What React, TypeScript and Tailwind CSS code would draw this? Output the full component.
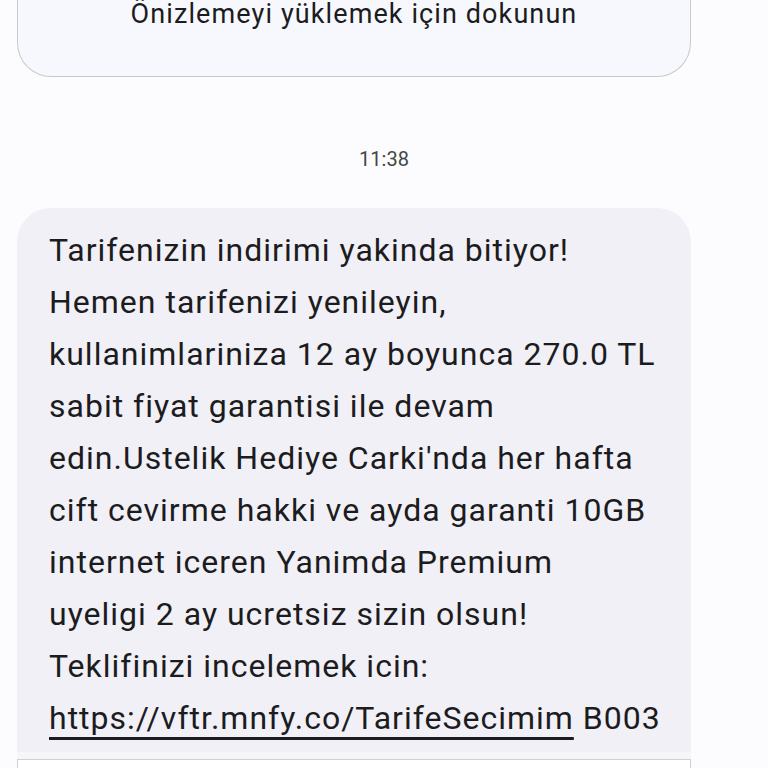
export default function App() {
  const lines = [
    "Tarifenizin indirimi yakinda bitiyor!",
    "Hemen tarifenizi yenileyin,",
    "kullanimlariniza 12 ay boyunca 270.0 TL",
    "sabit fiyat garantisi ile devam",
    "edin.Ustelik Hediye Carki'nda her hafta",
    "cift cevirme hakki ve ayda garanti 10GB",
    "internet iceren Yanimda Premium",
    "uyeligi 2 ay ucretsiz sizin olsun!",
    "Teklifinizi incelemek icin:",
  ];

  return (
    <div className="w-[768px] h-[768px] overflow-hidden bg-[#fcfbfe] font-['Roboto',sans-serif] text-[#1c1c1e]">
      <div className="ml-[17px] mr-[77px] -mt-[60px] h-[137px] rounded-b-[34px] border-[1.5px] border-t-0 border-[#c9c9cd] bg-[#f7f8fd] pt-[58px] text-center">
        <p className="text-[27px] leading-[32px] tracking-[1.1px]">Önizlemeyi yüklemek için dokunun</p>
      </div>

      <p className="mt-[68px] text-center text-[20px] leading-[28px] text-[#444746]">11:38</p>

      <div className="ml-[17px] mr-[77px] mt-[35px] rounded-t-[34px] bg-[#f0f0f6] pt-[16px] pl-[32px] pb-[8px] text-[32px] leading-[52px] tracking-[1px]">
        {lines.map((l) => (
          <p key={l} className="whitespace-nowrap">{l}</p>
        ))}
        <p className="whitespace-nowrap">
          <span className="underline decoration-[2.5px] underline-offset-[8px]">https://vftr.mnfy.co/TarifeSecimim</span> B003
        </p>
      </div>
      <div className="ml-[17px] mr-[77px] h-[7px] bg-[#f6f6f9]" />
      <div className="ml-[17px] mr-[77px] h-[40px] border-[1.5px] border-b-0 border-[#d0d0d4] bg-white" />
    </div>
  );
}
